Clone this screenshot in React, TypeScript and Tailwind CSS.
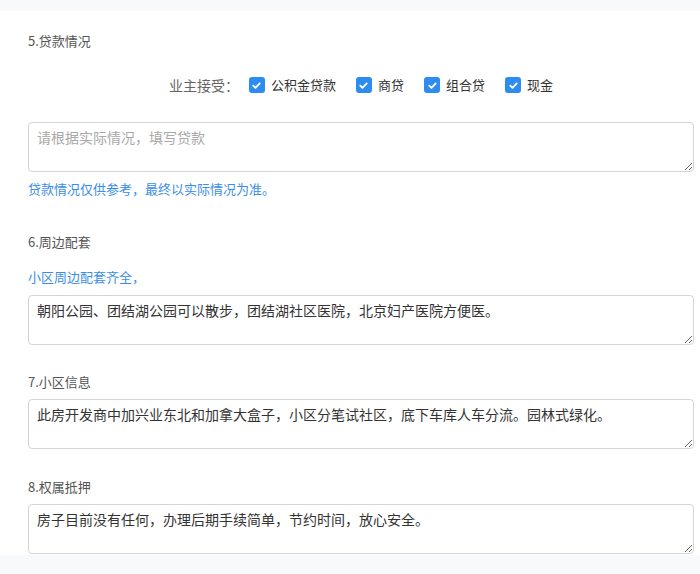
import React from "react";

const FONT = { fontFamily: '"Noto Sans CJK SC", "Noto Sans", sans-serif' };

const LOANS = ["公积金贷款", "商贷", "组合贷", "现金"];

function Check({ label }: { label: string }) {
    return (
        <label className="flex items-center gap-[6px]">
            <span className="w-[16px] h-[16px] rounded-[3px] bg-[#2d8cf0] flex items-center justify-center">
                <svg className="w-[11px] h-[11px]" viewBox="0 0 12 12" fill="none" stroke="white" strokeWidth={2} strokeLinecap="round" strokeLinejoin="round">
                    <path d="M2.5 6.2l2.4 2.4 4.6-4.8" />
                </svg>
            </span>
            <span className="text-[13px] text-[#333]">{label}</span>
        </label>
    );
}

function Area({ value, placeholder }: { value?: string; placeholder?: string }) {
    return (
        <textarea
            readOnly
            value={value ?? ""}
            placeholder={placeholder}
            className="block w-full h-[50px] border border-[#d4d4d4] rounded-[4px] px-[8px] pt-[4px] text-[14px] leading-[20px] text-[#333] placeholder:text-[#a9a9a9] outline-none resize-y bg-white"
            style={FONT}
        />
    );
}

export default function App() {
    return (
        <div className="w-[700px] h-[574px] bg-white flex flex-col overflow-hidden" style={FONT}>
            <div className="h-[11px] bg-[#f8f9fa] shrink-0" />

            <div className="pl-[28px] pr-[6px] flex flex-col">
                <div className="mt-[20px] h-[20px] leading-[20px] text-[13px] text-[#555]">5.贷款情况</div>

                <div className="mt-[22px] h-[24px] flex items-center justify-center gap-[20px]">
                    <span className="text-[14px] text-[#666] -mr-[10px]">业主接受：</span>
                    {LOANS.map(l => (
                        <Check key={l} label={l} />
                    ))}
                </div>

                <div className="mt-[25px]">
                    <Area placeholder="请根据实际情况，填写贷款" />
                </div>
                <div className="mt-[7px] h-[20px] leading-[20px] text-[13px] text-[#3a8ee6]">贷款情况仅供参考，最终以实际情况为准。</div>

                <div className="mt-[33px] h-[20px] leading-[20px] text-[13px] text-[#555]">6.周边配套</div>
                <div className="mt-[15px] h-[20px] leading-[20px] text-[13px] text-[#3a8ee6]">小区周边配套齐全，</div>
                <div className="mt-[8px]">
                    <Area value="朝阳公园、团结湖公园可以散步，团结湖社区医院，北京妇产医院方便医。" />
                </div>

                <div className="mt-[27px] h-[20px] leading-[20px] text-[13px] text-[#555]">7.小区信息</div>
                <div className="mt-[7px]">
                    <Area value="此房开发商中加兴业东北和加拿大盒子，小区分笔试社区，底下车库人车分流。园林式绿化。" />
                </div>

                <div className="mt-[28px] h-[20px] leading-[20px] text-[13px] text-[#555]">8.权属抵押</div>
                <div className="mt-[7px]">
                    <Area value="房子目前没有任何，办理后期手续简单，节约时间，放心安全。" />
                </div>
            </div>

            <div className="mt-[1px] flex-1 bg-[#f8f9fa]" />
        </div>
    );
}
